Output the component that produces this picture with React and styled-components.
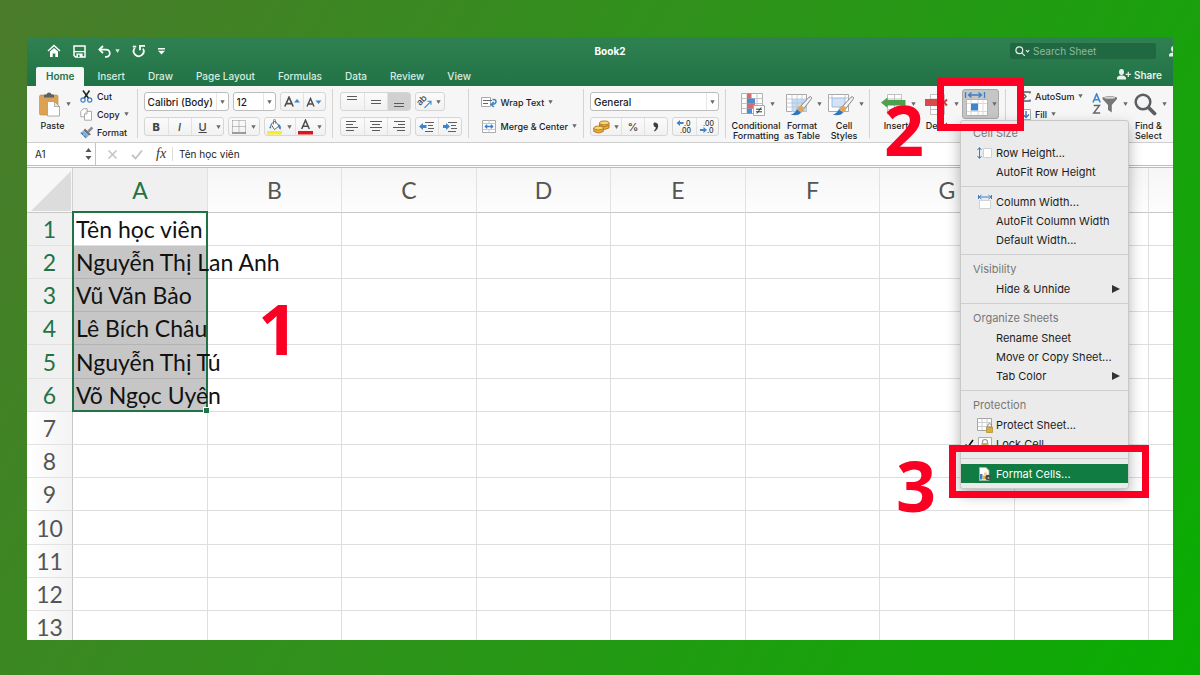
import React from 'react';
import styled, { createGlobalStyle, css } from 'styled-components';

const GlobalStyle = createGlobalStyle`
    *, *::before, *::after {
        box-sizing: border-box;
    }
    body {
        margin: 0;
        font-family: Inter, "Liberation Sans", sans-serif;
        font-size: 9px;
        color: #1c1c1c;
    }
    button, input, select {
        font: inherit;
        color: inherit;
        margin: 0;
        padding: 0;
        border: 0;
        background: none;
        outline: none;
    }
    svg {
        display: block;
        flex: none;
    }
`;

const columns = ['A', 'B', 'C', 'D', 'E', 'F', 'G', 'H', 'I'];
const names = ['Tên học viên', 'Nguyễn Thị Lan Anh', 'Vũ Văn Bảo', 'Lê Bích Châu', 'Nguyễn Thị Tú', 'Võ Ngọc Uyên'];
const rows = Array.from({ length: 13 }, (_, i) => i + 1);
const tabs = ['Home', 'Insert', 'Draw', 'Page Layout', 'Formulas', 'Data', 'Review', 'View'];

/* icons */

const Caret = ({ color = '#6a6a6a' }) => (
    <svg width="5" height="4" viewBox="0 0 5 4"><path d="M.3.300h4.400L2.500 4z" fill={color} /></svg>
);

const HomeIcon = () => (
    <svg width="14" height="14" viewBox="0 0 14 14" fill="none" stroke="#fff">
        <path d="M1 7 7 1.500 13 7" strokeWidth="1.500" />
        <path d="M3 7.600 7 4l4 3.600V13H8.300V9.600H5.700V13H3z" fill="#fff" stroke="none" />
    </svg>
);

const SaveIcon = () => (
    <svg width="13" height="13" viewBox="0 0 13 13">
        <path d="M1 1h11v11H2.500L1 10.500z" fill="none" stroke="#fff" strokeWidth="1.500" />
        <path d="M1 6h11v1.200H1zM3.400 8.500h6.200V12H3.400z" fill="#fff" />
        <path d="M5 9.800h1.500V12H5z" fill="#2a7a4b" />
    </svg>
);

const UndoIcon = () => (
    <svg width="13" height="13" viewBox="0 0 13 13" fill="none" stroke="#fff" strokeWidth="1.800">
        <path d="M5 1 1.400 4.600 5 8.200" />
        <path d="M1.800 4.600h6.400a3.400 3.400 0 0 1 0 7.200H7" />
    </svg>
);

const RedoIcon = () => (
    <svg width="14" height="14" viewBox="0 0 14 14" fill="none" stroke="#fff" strokeWidth="1.800">
        <path d="M2.800 4A5 5 0 1 0 11 4.600" />
        <path d="M8 6.200V1.800H13" />
        <path d="M.8 2.600h3.400" />
    </svg>
);

const MoreIcon = () => (
    <svg width="7" height="7" viewBox="0 0 7 7" fill="#fff"><path d="M0 0h7v1.400H0zM0 2.800h7L3.500 6.600z" /></svg>
);

const LoupeIcon = () => (
    <svg width="15" height="11" viewBox="0 0 15 11" fill="none" stroke="#e3efe8" strokeWidth="1.200">
        <circle cx="4.300" cy="4.300" r="3.400" />
        <path d="m6.800 6.800 3 3M11 4.200l1.600 1.600 1.600-1.600" />
    </svg>
);

const PersonIcon = () => (
    <svg width="14" height="11" viewBox="0 0 14 11" fill="#e6f2ea">
        <ellipse cx="4.500" cy="3" rx="2.500" ry="3" />
        <path d="M0 10.400V8.600C.6 7 2.600 6.400 4.500 6.400S8.400 7 9 8.600v1.800zM10.700 2.700h1.200v2h2v1.200h-2v2h-1.200v-2h-2V4.700h2z" />
    </svg>
);

const PasteIcon = () => (
    <svg width="22" height="25" viewBox="0 0 22 25">
        <rect x=".5" y="3" width="18.500" height="20" rx="1.500" fill="#dca253" stroke="#c18a3e" strokeWidth=".6" />
        <path d="M5 5.500V3.500q0-1 1-1h1.500Q8 .5 10 .5t2.500 2H14q1 0 1 1v2z" fill="#5d6064" />
        <path d="M8.500 9.500h7l5 5v9.500h-12z" fill="#fff" stroke="#9b9b9b" strokeWidth=".8" />
        <path d="M15.500 9.500v5h5z" fill="#e8e8e8" stroke="#9b9b9b" strokeWidth=".8" />
    </svg>
);

const CutIcon = () => (
    <svg width="13" height="13" viewBox="0 0 13 13" fill="none">
        <path d="M3 .5 8.700 8.500M9.500.5 4 8.500" stroke="#222" strokeWidth="1.500" />
        <circle cx="3" cy="10" r="2.100" stroke="#3c7fc4" strokeWidth="1.200" />
        <circle cx="9.700" cy="10" r="2.100" stroke="#3c7fc4" strokeWidth="1.200" />
    </svg>
);

const CopyIcon = () => (
    <svg width="13" height="13" viewBox="0 0 13 13" fill="#fff" stroke="#a2a2a2" strokeWidth=".9">
        <path d="M.8 3.500 3.200.8h4v8H.8z" />
        <path d="M4.500 6 7 3.400h4.500v8.800h-7z" />
        <path d="M4.500 6H7V3.400" />
    </svg>
);

const FormatIcon = () => (
    <svg width="13" height="13" viewBox="0 0 13 13">
        <path d="m12.400 1.400-4.200 4.200" stroke="#8b8f94" strokeWidth="2.600" />
        <path d="m5 2.600 6 5.800-2.200 1.200L3.500 4.400z" fill="#6c7176" />
        <path d="M3.500 4.400 8.800 9.600 6 12.400.3 6.800z" fill="#7fb0df" />
        <path d="m.3 6.800 2.900.4-.4 2 2.600.8.6 2.400z" fill="#46729c" />
    </svg>
);

const BordersIcon = () => (
    <svg width="14" height="14" viewBox="0 0 14 14" stroke="#8f8f8f" strokeDasharray="1 1" fill="none">
        <path d="M.5.500h13v12M.5.500v12M7 .5v12M.5 6.500h13" />
        <path d="M0 13h14" stroke="#444" strokeDasharray="none" />
    </svg>
);

const BucketIcon = () => (
    <svg width="15" height="16" viewBox="0 0 15 16">
        <path d="M4 5.200 8 2l4 5-4.500 3.600z" fill="#fff" stroke="#666" />
        <path d="M6.500 5.500V1.500q0-1 1-1t1 1v3" fill="none" stroke="#666" strokeWidth=".8" />
        <path d="M4 5.200 2.200 9l2 .4zM11.500 5q3.500 2 2 5.800Q10.500 9 11.500 5z" fill="#3c7fc4" />
        <path d="M0 12h15v3.500H0z" fill="#f5ee2c" />
    </svg>
);

const FontColorIcon = () => (
    <svg width="15" height="16" viewBox="0 0 15 16">
        <path d="M3.700 10 7.500 1.200 11.300 10M5 7.200h5" fill="none" stroke="#4b4b4b" strokeWidth="1.500" />
        <path d="M0 12h15v3.500H0z" fill="#d9161c" />
    </svg>
);

const SizeIcon = ({ down }) => (
    <svg width="16" height="12" viewBox="0 0 16 12">
        {down
            ? <path d="M1 10.500 4.500 2.500 8 10.500M2.300 8h4.400" fill="none" stroke="#4b4b4b" strokeWidth="1.400" />
            : <path d="M.8 10.500 5 1.200l4.200 9.300M2.300 7.600h5.400" fill="none" stroke="#4b4b4b" strokeWidth="1.600" />}
        <path d={down ? 'M9.500 4.500h6L12.500 8z' : 'M10 6.500h6L13 3z'} fill="#3c86cf" />
    </svg>
);

const LINES = {
    top: [[2, 1, 10], [2, 4, 10]],
    middle: [[2, 5, 10], [2, 8, 10]],
    bottom: [[2, 8, 10], [2, 11, 10]],
    left: [[1, 1, 10], [1, 4, 7], [1, 7, 12], [1, 10, 8]],
    center: [[1, 1, 12], [3, 4, 8], [1, 7, 12], [3, 10, 8]],
    right: [[2, 1, 11], [6, 4, 7], [1, 7, 12], [5, 10, 8]],
};

const LinesIcon = ({ kind }) => (
    <svg width="14" height="13" viewBox="0 0 14 13" fill="#5a5a5a">
        {LINES[kind].map(([x, y, w]) => <rect key={y} x={x} y={y} width={w} height="1" />)}
    </svg>
);

const IndentIcon = ({ right }) => (
    <svg width="15" height="11" viewBox="0 0 15 11">
        <path d="M6 1h9v1H6zM9 4h5v1H9zM9 7h6v1H9zM6 10h8v1H6z" fill="#616161" />
        <path d={right ? 'M8 5.500 4 2v2H1v3h3v2z' : 'M0 5.500 4 2v2h3.500v3H4v2z'} fill="#3c86cf" />
    </svg>
);

const OrientationIcon = () => (
    <svg width="15" height="15" viewBox="0 0 15 15">
        <text x="3" y="12" fontSize="9" fill="#444" transform="rotate(-45 3 12)">ab</text>
        <path d="m7.500 13.800 6-6M10.500 7.300H14V10.800" fill="none" stroke="#3c86cf" strokeWidth="1.100" />
    </svg>
);

const WrapIcon = () => (
    <svg width="16" height="12" viewBox="0 0 16 12" fill="none">
        <path d="M.5 1.500h9v9h-9z" fill="#fff" stroke="#aaa" />
        <path d="M2 4.500h9M2 7.500h5" stroke="#666" />
        <path d="M11.500 3.500q3.500-.5 3.500 2T11 8.500M12.800 6 10 8.500l2.800 2.500" stroke="#3c86cf" strokeWidth="1.500" />
    </svg>
);

const MergeIcon = () => (
    <svg width="16" height="13" viewBox="0 0 16 13" fill="none">
        <path d="M1.500.500h13v12h-13z" fill="#fff" stroke="#aaa" />
        <path d="M1.500 3.500h13M1.500 9.500h13M8 .5v3M8 9.500v3" stroke="#c9c9c9" />
        <path d="M4.500 6.500h7M6.200 4.600 4.200 6.500l2 1.900M9.800 4.600l2 1.900-2 1.900" stroke="#3c7fc4" strokeWidth="1.300" />
    </svg>
);

const CoinsIcon = () => (
    <svg width="17" height="14" viewBox="0 0 17 14" fill="#eeb13c" stroke="#a16b14" strokeWidth=".8">
        <path d="M6.500 3v5q4.500 3 9.500 0V3z" />
        <path d="M6.500 5.500q4.500 2.500 9.500 0" />
        <ellipse cx="11.300" cy="2.900" rx="4.800" ry="2" fill="#fbd370" />
        <path d="M.8 8v3.500q4.500 3 9.500 0V8z" />
        <ellipse cx="5.600" cy="8" rx="4.800" ry="2" fill="#fbd370" />
    </svg>
);

const CommaIcon = () => (
    <svg width="6" height="10" viewBox="0 0 6 10">
        <path d="M1 .6Q5.400.4 5.200 4.400 5 7.600 1.800 9.600L1 8.800Q3 7 2.800 5.200.6 4.800.5 3 .4 1 1 .6z" fill="#3c3c3c" />
    </svg>
);

const DecimalIcon = ({ less }) => (
    <svg width="17" height="15" viewBox="0 0 17 15" fontSize="7" fill="#333">
        {less ? <text x="4" y="7">.00</text> : <text x="8" y="7">.0</text>}
        {less ? <text x="8" y="14">.0</text> : <text x="4" y="14">.00</text>}
        {less
            ? <path d="M8 11 4.500 8v2H1v2h3.500v2z" fill="#3c86cf" />
            : <path d="M.5 4 4 1v2h3.500v2H4v2z" fill="#3c86cf" />}
    </svg>
);

const ConditionalIcon = () => (
    <svg width="24" height="24" viewBox="0 0 24 24">
        <path d="M.5 1.500h21v20H.5z" fill="#fff" stroke="#b0b0b0" />
        <path d="M.5 6.500h21M.5 11.500h21M.5 16.500h21M6 1.500v20M16 1.500v20" stroke="#c4c4c4" fill="none" />
        <path d="M6 1.500h4.500v5H6zM6 11.500h8v5H6z" fill="#d9696c" />
        <path d="M6 6.500h8v5H6zM6 16.500h5v5H6z" fill="#4e8ccb" />
        <path d="M12.500 13.500h11v10h-11z" fill="#fff" stroke="#aaa" />
        <path d="M15 17.200h6M15 19.800h6M20 15.500l-4 6" stroke="#333" />
    </svg>
);

const BrushIcon = ({ single }) => (
    <svg width="26" height="24" viewBox="0 0 26 24">
        <path d="M.5 2.500h20v17H.5z" fill="#fff" stroke="#a9a9a9" />
        {single
            ? <path d="M4 6h13v9H4z" fill="#d3e2f5" stroke="#9bbce4" />
            : <path d="M6 7h14.500v12.500H6z" fill="#c5dcf3" />}
        {single
            ? <path d="M.5 6H4M17 6h3.500M4 2.500V6M17 2.500V6" stroke="#c4c4c4" />
            : <path d="M.5 7h20M.5 11h20M.5 15h20M6 2.500v17M11 2.500v17M16 2.500v17" stroke="#b3c4d4" strokeWidth=".8" />}
        <path d="M23 5.200q2-1.200 2.500.4.200.8-.7 2L17.500 17l-3-2.600z" fill="#f3f3f3" stroke="#777" strokeWidth=".9" />
        <path d="M14 14q4-.5 4.200 3 0 2.500-3 3.700L10.800 17.200q.8-2.700 3.200-3.200z" fill="#e0a45a" />
        <path d="M10.800 17.200 15.200 20.700Q11.500 24.600 4.500 22.600 9 21.500 10.800 17.200z" fill="#2e76bf" />
    </svg>
);

const RowsIcon = ({ remove }) => (
    <svg width="25" height="23" viewBox="0 0 25 23">
        <path d="M6.500 1.500h14v20h-14zM6.500 6h14M6.500 16.500h14M13.500 1.500v20" fill="#fff" stroke="#c0c0c0" />
        {remove
            ? <path d="M1 6h15v7H1z" fill="#d94a4c" />
            : <path d="M0 9.500 6.500 4.500V7H24.500v5.500H6.500V15z" fill="#4ea04e" />}
        {remove && <path d="m17 6.500 6 6M23 6.500l-6 6" stroke="#db3b3c" strokeWidth="2" />}
    </svg>
);

const CellFormatIcon = () => (
    <svg width="25" height="26" viewBox="0 0 25 26">
        <path d="M1.500 1v6M20.500 1v6M4.500 4h13M7.500 1.500 4.500 4l3 2.500M14.500 1.500l3 2.500-3 2.500" fill="none" stroke="#3c7fc4" strokeWidth="1.300" />
        <path d="M2.500 8.500h21v16H2.500z" fill="#fff" stroke="#b3b3b3" />
        <path d="M3 12.500h20M3 20.500h20M7 9v15M14 9v15M19 9v15" stroke="#dadada" />
        <path d="M7 12.500h7v7H7z" fill="#3c86cf" />
    </svg>
);

const SumIcon = () => (
    <svg width="10" height="11" viewBox="0 0 10 11" fill="none" stroke="#5c5c5c" strokeWidth="1.400">
        <path d="M9 2.500V1H1l4 4.500L1 10h8V8.500" />
    </svg>
);

const FillIcon = () => (
    <svg width="10" height="11" viewBox="0 0 10 11" fill="none">
        <path d="M.5.500h9v10h-9z" fill="#fff" stroke="#aaa" />
        <path d="M5 2v6.500M2 5.500l3 3 3-3" stroke="#3c7fc4" strokeWidth="1.500" />
    </svg>
);

const SortIcon = () => (
    <svg width="26" height="22" viewBox="0 0 26 22">
        <path d="M1 9.500 4.600 1l3.600 8.500M2.300 6.800h4.600" fill="none" stroke="#3c86cf" strokeWidth="1.600" />
        <path d="M1.700 12.500h5.800L1.700 20h6.500" fill="none" stroke="#666" strokeWidth="1.400" />
        <path d="M10.500 4.500q7.500-2.500 14.500 0v1.600L19.800 12v7.500L16 17v-5l-5.500-5.900z" fill="#777" />
        <ellipse cx="17.700" cy="4.800" rx="5.500" ry="1" fill="#d4d4d4" />
    </svg>
);

const FindIcon = () => (
    <svg width="23" height="23" viewBox="0 0 23 23" fill="none" stroke="#5e5e5e">
        <circle cx="9" cy="9" r="7.300" strokeWidth="2.500" fill="#f1f5f8" />
        <path d="m15 15 5.500 5.500" strokeWidth="3.800" strokeLinecap="round" />
    </svg>
);

const RowHeightIcon = () => (
    <svg width="16" height="14" viewBox="0 0 16 14" fill="none">
        <path d="M2.500 2v10M.5 4l2-2.500 2 2.500M.5 10l2 2.500 2-2.500" stroke="#3c7fc4" />
        <path d="M6.500 2.500h8v9h-8z" fill="#fff" stroke="#cfcfcf" />
    </svg>
);

const ColumnWidthIcon = () => (
    <svg width="16" height="16" viewBox="0 0 16 16" fill="none">
        <path d="M2.500 3h10M4.500 1 2 3l2.500 2M11.500 1 14 3l-2.500 2M1.500 1v4M14.500 1v4" stroke="#3c7fc4" />
        <path d="M2.500 6.500h11v8h-11z" fill="#fff" stroke="#d2d2d2" />
    </svg>
);

const ProtectIcon = () => (
    <svg width="16" height="16" viewBox="0 0 16 16" fill="none">
        <path d="M.5 1.500h14v12H.5z" fill="#fff" stroke="#a5a5a5" />
        <path d="M1 5.500h13M1 9.500h13M5 2v11M10 2v11" stroke="#cfcfcf" />
        <path d="M10.800 10V8.500a1.800 1.800 0 0 1 3.600 0V10" stroke="#8c8c8c" />
        <path d="M9.500 10h6v5.500h-6z" fill="#dcae3a" stroke="#a57f20" strokeWidth=".6" />
    </svg>
);

const LockIcon = () => (
    <svg width="16" height="16" viewBox="0 0 16 16" fill="none">
        <path d="M1.500 1.500h13v13h-13z" fill="#fff" stroke="#adadad" />
        <path d="M5.500 8V6a2.500 2.500 0 0 1 5 0V8" stroke="#999" strokeWidth="1.200" />
        <path d="M4.500 7h7v6h-7z" fill="#e2a25a" />
    </svg>
);

const FormatCellsIcon = () => (
    <svg width="16" height="16" viewBox="0 0 16 16" fill="none">
        <path d="M2.500 1.500h6.500l3 3v10h-9.500z" fill="#fff" stroke="#9fb7a7" strokeWidth=".8" />
        <path d="M3 8h2.500v5.500H3z" fill="#3c7fc4" />
        <path d="M5.800 9.500H8v4H5.800z" fill="#e9b440" />
        <path d="M7 6.500h3v3H7z" fill="#f0d38a" />
        <circle cx="11" cy="11.500" r="2.800" fill="#4a4a4a" />
        <circle cx="11.500" cy="12" r="1.100" fill="#aaa" />
    </svg>
);

/* layout */

const Page = styled.main`
    display: flex;
    height: 100vh;
    padding: 37px 27px 35px;
    background: linear-gradient(120deg, #4a7b2b 0%, #2c9419 50%, #09ad02 100%);
`;

const Window = styled.div`
    flex: 1;
    min-width: 0;
    display: flex;
    flex-direction: column;
    overflow: hidden;
    background: #fff;
`;

const Header = styled.header`
    background: linear-gradient(#2f8152, #217346);
    color: #fff;
`;

const TitleBar = styled.div`
    display: grid;
    grid-template-columns: 1fr auto 1fr;
    align-items: center;
    height: 30px;
    padding: 0 0 2px 20px;
`;

const QuickTools = styled.div`
    display: flex;
    align-items: center;
    gap: 12px;
`;

const ToolButton = styled.button`
    display: flex;
    align-items: center;
    gap: 4px;
`;

const BookTitle = styled.h1`
    margin: 0;
    font-size: 10px;
    font-weight: 700;
`;

const TitleEnd = styled.div`
    display: flex;
    justify-content: flex-end;
    align-items: center;
    gap: 13px;
`;

const SearchBox = styled.label`
    display: flex;
    align-items: center;
    gap: 3px;
    width: 146px;
    height: 16px;
    padding: 0 5px;
    border-radius: 2px;
    background: #1f6841;

    input {
        flex: 1;
        min-width: 0;
        font-size: 10px;
    }
    input::placeholder {
        color: #8fb9a1;
        opacity: 1;
    }
`;

const CroppedIcon = styled.span`
    width: 4px;
    overflow: hidden;
`;

const TabBar = styled.nav`
    display: flex;
    align-items: stretch;
    height: 19px;
    padding: 0 11px 0 9px;
`;

const Tab = styled.a`
    display: flex;
    align-items: center;
    padding: 0 10px 2px;
    margin-right: 3px;
    border-radius: 2px 2px 0 0;
    font-size: 10px;
    font-weight: 500;
    text-decoration: none;
    color: #d9ebe0;

    ${({ $active }) => $active && css`
        background: #f6f6f6;
        color: #217346;
        font-weight: 600;
    `}
`;

const ShareButton = styled.button`
    display: flex;
    align-items: center;
    gap: 3px;
    margin-left: auto;
    padding-bottom: 4px;
    font-size: 10px;
    font-weight: 600;
    color: #e6f2ea;
`;

const Ribbon = styled.section`
    position: relative;
    z-index: 2;
    display: flex;
    height: 57px;
    padding: 1px 0 1px 4px;
    background: #f6f6f6;
    border-bottom: 1px solid #cfcfcf;
    font-weight: 500;
`;

const Group = styled.div`
    flex: none;
    display: flex;
    gap: ${({ $gap }) => $gap || 0}px;
    padding: ${({ $pad }) => $pad || '0 7px 0 6px'};
    background: ${({ $last }) => ($last ? 'none' : 'linear-gradient(#d4d4d4, #d4d4d4) right 2px / 1px 49px no-repeat')};
`;

const Stack = styled.div`
    display: flex;
    flex-direction: column;
    gap: ${({ $gap }) => $gap || 0}px;
    padding-top: ${({ $top }) => $top || 0}px;
`;

const Line = styled.div`
    display: flex;
    gap: 4px;
`;

const SmallButton = styled.button`
    flex: none;
    display: flex;
    align-items: center;
    gap: 4px;
    height: 18px;
    white-space: nowrap;
`;

const BigButton = styled.button`
    display: flex;
    flex-direction: column;
    align-items: center;
    width: ${({ $width }) => $width}px;
    line-height: 10px;
    white-space: nowrap;
`;

const BigIcon = styled.span`
    display: flex;
    align-items: center;
    gap: 5px;
    height: 34px;
    padding-left: 4px;
`;

const Field = styled.label`
    display: flex;
    align-items: center;
    width: ${({ $width }) => $width}px;
    height: 19px;
    border: 1px solid #bdbdbd;
    border-radius: 3px;
    background: #fff;

    select {
        flex: 1;
        min-width: 0;
        height: 17px;
        padding-left: 3px;
        border-right: 1px solid #e6e6e6;
        appearance: none;
        font-size: 10px;
    }
    svg {
        margin: 0 3px;
    }
`;

const Segments = styled.div`
    display: flex;
    height: 19px;
    border: 1px solid #d6d6d6;
    border-radius: 3px;
    background: linear-gradient(#fbfbfb, #f1f1f1);
    overflow: hidden;
`;

const Segment = styled.button`
    flex: none;
    display: flex;
    align-items: center;
    justify-content: center;
    width: ${({ $width }) => $width || 23}px;
    border-left: ${({ $plain }) => ($plain ? '0' : '1px solid #e2e2e2')};
    background: ${({ $on }) => ($on ? '#d0d0d0' : 'none')};
    font-size: 11px;
    font-weight: ${({ $bold }) => ($bold ? 800 : 500)};
    font-style: ${({ $italic }) => ($italic ? 'italic' : 'normal')};
    text-decoration: ${({ $underline }) => ($underline ? 'underline' : 'none')};
    color: #444;

    &:first-child {
        border-left: 0;
    }
`;

const FormatAnchor = styled.div`
    position: relative;
    width: 37px;
    height: 30px;
    margin-top: 2px;
`;

const FormatButton = styled.button`
    display: flex;
    align-items: center;
    justify-content: center;
    gap: 3px;
    width: 100%;
    height: 100%;
    border: 1px solid #a8a8a8;
    border-radius: 3px;
    background: #c6c6c6;
`;

/* menu */

const Menu = styled.div`
    position: absolute;
    z-index: 1;
    top: 31px;
    left: -2px;
    width: 169px;
    padding: 3px 0 5px;
    border: 1px solid #c8c8c8;
    border-radius: 3px;
    background: #ebebeb;
    box-shadow: 0 6px 14px rgba(0, 0, 0, 0.3);
    font-size: 11px;
    font-weight: 400;
`;

const MenuSection = styled.div`
    & + & {
        margin-top: 5px;
        padding-top: 5px;
        border-top: 1px solid #cfcfcf;
    }
`;

const MenuHeading = styled.div`
    height: 19px;
    padding-left: 12px;
    line-height: 19px;
    color: #777;
`;

const MenuItem = styled.button`
    position: relative;
    display: grid;
    grid-template-columns: 9px 16px 1fr auto;
    align-items: center;
    gap: 3px;
    width: 100%;
    height: 19px;
    padding: 0 8px 0 4px;
    text-align: left;
    white-space: nowrap;
    background: ${({ $active }) => ($active ? '#107c41' : 'none')};
    color: ${({ $active }) => ($active ? '#fff' : '#1c1c1c')};
`;

const Ring = styled.span`
    position: absolute;
    z-index: 3;
    inset: ${({ $inset }) => $inset};
    border: 7px solid #fb0023;
    pointer-events: none;
`;

const StepNumber = styled.span`
    position: absolute;
    z-index: 3;
    top: ${({ $top }) => $top}px;
    left: ${({ $left }) => $left}px;
    font-family: "Open Sans", "Noto Sans", sans-serif;
    font-size: 70px;
    font-weight: 700;
    line-height: 70px;
    color: #fb0023;
    pointer-events: none;
`;

/* formula bar */

const FormulaBar = styled.div`
    display: flex;
    align-items: center;
    height: 25px;
    border-bottom: 3px double #bcbcbc;
    background: #fff;
`;

const NameBox = styled.div`
    display: flex;
    align-items: center;
    align-self: stretch;
    width: 69px;
    padding: 0 3px 0 8px;
    border-right: 1px solid #c4c4c4;

    input {
        flex: 1;
        min-width: 0;
        font-size: 10px;
    }
`;

const FormulaTools = styled.div`
    display: flex;
    align-items: center;
    gap: 13px;
    height: 14px;
    padding: 0 6px 0 11px;
    border-right: 1px solid #dcdcdc;
`;

const FxButton = styled.button`
    font-family: "Liberation Serif", serif;
    font-size: 14px;
    font-style: italic;
    line-height: 14px;
    color: #333;
`;

const FormulaInput = styled.input`
    flex: 1;
    min-width: 0;
    padding-left: 6px;
    font-size: 10px;
`;

/* sheet */

const Sheet = styled.div`
    flex: 1;
    min-height: 0;
    overflow: hidden;
`;

const Grid = styled.table`
    table-layout: fixed;
    width: 1256px;
    border-collapse: separate;
    border-spacing: 0;
    font-family: Lato, "Noto Sans", sans-serif;
    font-size: 23px;
    line-height: 28px;
    color: #111;
`;

const Col = styled.col`
    width: ${({ $head }) => ($head ? 46 : 134)}px;

    &:nth-child(even) {
        width: 135px;
    }
`;

const Corner = styled.td`
    height: 45px;
    padding: 3px 1px 1px 4px;
    border-right: 1px solid #d0d0d0;
    border-bottom: 1px solid #c8c8c8;
    background: #f7f7f7;
`;

const ColumnHead = styled.th`
    padding: 0;
    height: 45px;
    border-right: 1px solid #e2e2e2;
    border-bottom: 1px solid #c8c8c8;
    background: ${({ $active }) => ($active ? '#f0f0f0' : 'linear-gradient(#f6f6f6, #fdfdfd)')};
    color: ${({ $active }) => ($active ? '#217346' : '#555')};
    font-weight: 400;
`;

const Row = styled.tr`
    height: 33px;

    &:nth-child(5n) {
        height: 34px;
    }
`;

const RowHead = styled.th`
    padding: 0;
    border-right: 1px solid #c8c8c8;
    border-bottom: 1px solid #e2e2e2;
    background: ${({ $active }) => ($active ? '#f0f0f0' : 'linear-gradient(90deg, #fff, #f3f3f3)')};
    color: ${({ $active }) => ($active ? '#217346' : '#555')};
    font-weight: 400;
`;

const Cell = styled.td`
    position: relative;
    padding: 0 0 0 3px;
    border-right: 1px solid #dedede;
    border-bottom: 1px solid ${({ $selected }) => ($selected ? '#b4b4b4' : '#dedede')};
    background: ${({ $selected }) => ($selected ? '#c6c6c6' : 'none')};
    white-space: nowrap;
`;

const CellText = styled.span`
    position: relative;
    z-index: 2;
`;

const Selection = styled.span`
    position: absolute;
    z-index: 1;
    top: -2px;
    left: -1px;
    width: calc(100% + 2px);
    height: 201px;
    border: 2px solid #217346;
    pointer-events: none;

    &::after {
        content: '';
        position: absolute;
        right: -3px;
        bottom: -3px;
        width: 6px;
        height: 6px;
        border: solid #fff;
        border-width: 1px 0 0 1px;
        background: #217346;
    }
`;

const Item = ({ icon, label, checked, submenu, active, children }) => (
    <MenuItem role="menuitem" $active={active}>
        <span>
            {checked && (
                <svg width="9" height="9" viewBox="0 0 9 9"><path d="M.5 5.500 3 8 8 1" fill="none" stroke="#111" strokeWidth="1.600" /></svg>
            )}
        </span>
        <span>{icon}</span>
        <span>{label}</span>
        {submenu && <svg width="8" height="8" viewBox="0 0 8 8"><path d="M0 0v8l8-4z" fill="#333" /></svg>}
        {children}
    </MenuItem>
);

function FormatMenu() {
    return (
        <Menu role="menu" aria-label="Format">
            <MenuSection>
                <MenuHeading>Cell Size</MenuHeading>
                <Item icon={<RowHeightIcon />} label="Row Height..." />
                <Item label="AutoFit Row Height" />
            </MenuSection>
            <MenuSection>
                <Item icon={<ColumnWidthIcon />} label="Column Width..." />
                <Item label="AutoFit Column Width" />
                <Item label="Default Width..." />
            </MenuSection>
            <MenuSection>
                <MenuHeading>Visibility</MenuHeading>
                <Item label="Hide & Unhide" submenu />
            </MenuSection>
            <MenuSection>
                <MenuHeading>Organize Sheets</MenuHeading>
                <Item label="Rename Sheet" />
                <Item label="Move or Copy Sheet..." />
                <Item label="Tab Color" submenu />
            </MenuSection>
            <MenuSection>
                <MenuHeading>Protection</MenuHeading>
                <Item icon={<ProtectIcon />} label="Protect Sheet..." />
                <Item icon={<LockIcon />} label="Lock Cell" checked />
            </MenuSection>
            <MenuSection>
                <Item icon={<FormatCellsIcon />} label="Format Cells..." active>
                    <Ring $inset="-19px -21px -15px -12px" />
                    <StepNumber $top={-14} $left={-65}>3</StepNumber>
                </Item>
            </MenuSection>
        </Menu>
    );
}

function AppHeader() {
    return (
        <Header>
            <TitleBar>
                <QuickTools>
                    <ToolButton aria-label="Home"><HomeIcon /></ToolButton>
                    <ToolButton aria-label="Save"><SaveIcon /></ToolButton>
                    <ToolButton aria-label="Undo"><UndoIcon /><Caret color="#d5e8dc" /></ToolButton>
                    <ToolButton aria-label="Repeat"><RedoIcon /></ToolButton>
                    <ToolButton aria-label="Customize toolbar"><MoreIcon /></ToolButton>
                </QuickTools>
                <BookTitle>Book2</BookTitle>
                <TitleEnd>
                    <SearchBox>
                        <LoupeIcon />
                        <input type="search" aria-label="Search Sheet" placeholder="Search Sheet" />
                    </SearchBox>
                    <CroppedIcon><PersonIcon /></CroppedIcon>
                </TitleEnd>
            </TitleBar>
            <TabBar>
                {tabs.map((tab) => (
                    <Tab key={tab} href={`#${tab}`} $active={tab === 'Home'}>{tab}</Tab>
                ))}
                <ShareButton><PersonIcon />Share</ShareButton>
            </TabBar>
        </Header>
    );
}

function AppRibbon() {
    return (
        <Ribbon>
            <Group $gap={6} $pad="0 9px 0 0">
                <BigButton $width={43}>
                    <BigIcon><PasteIcon /><Caret /></BigIcon>
                    Paste
                </BigButton>
                <Stack>
                    <SmallButton><CutIcon />Cut</SmallButton>
                    <SmallButton><CopyIcon />Copy <Caret /></SmallButton>
                    <SmallButton><FormatIcon />Format</SmallButton>
                </Stack>
            </Group>
            <Group>
                <Stack $gap={6} $top={5}>
                    <Line>
                        <Field $width={85}>
                            <select aria-label="Font"><option>Calibri (Body)</option></select>
                            <Caret />
                        </Field>
                        <Field $width={43}>
                            <select aria-label="Font size"><option>12</option></select>
                            <Caret />
                        </Field>
                        <Segments>
                            <Segment $width={22} aria-label="Increase font size"><SizeIcon /></Segment>
                            <Segment $width={22} aria-label="Decrease font size"><SizeIcon down /></Segment>
                        </Segments>
                    </Line>
                    <Line>
                        <Segments>
                            <Segment $bold>B</Segment>
                            <Segment $italic>I</Segment>
                            <Segment $underline>U</Segment>
                            <Segment $width={9} $plain aria-label="Underline styles"><Caret /></Segment>
                        </Segments>
                        <Segments>
                            <Segment $width={20} aria-label="Borders"><BordersIcon /></Segment>
                            <Segment $width={10} $plain aria-label="Border styles"><Caret /></Segment>
                        </Segments>
                        <Segments>
                            <Segment $width={19} aria-label="Fill color"><BucketIcon /></Segment>
                            <Segment $width={11} $plain aria-label="Fill colors"><Caret /></Segment>
                            <Segment $width={20} aria-label="Font color"><FontColorIcon /></Segment>
                            <Segment $width={10} $plain aria-label="Font colors"><Caret /></Segment>
                        </Segments>
                    </Line>
                </Stack>
            </Group>
            <Group $pad="0 7px">
                <Stack $gap={6} $top={5}>
                    <Line>
                        <Segments>
                            <Segment aria-label="Top align"><LinesIcon kind="top" /></Segment>
                            <Segment aria-label="Middle align"><LinesIcon kind="middle" /></Segment>
                            <Segment aria-label="Bottom align" $on><LinesIcon kind="bottom" /></Segment>
                        </Segments>
                        <Segments>
                            <Segment $width={18} aria-label="Orientation"><OrientationIcon /></Segment>
                            <Segment $width={10} $plain aria-label="Orientations"><Caret /></Segment>
                        </Segments>
                    </Line>
                    <Line>
                        <Segments>
                            <Segment aria-label="Align left"><LinesIcon kind="left" /></Segment>
                            <Segment aria-label="Center"><LinesIcon kind="center" /></Segment>
                            <Segment aria-label="Align right"><LinesIcon kind="right" /></Segment>
                        </Segments>
                        <Segments>
                            <Segment $width={22} aria-label="Decrease indent"><IndentIcon /></Segment>
                            <Segment $width={23} aria-label="Increase indent"><IndentIcon right /></Segment>
                        </Segments>
                    </Line>
                </Stack>
            </Group>
            <Group $pad="0 7px 0 12px">
                <Stack $gap={6} $top={6}>
                    <SmallButton><WrapIcon />Wrap Text <Caret /></SmallButton>
                    <SmallButton><MergeIcon />Merge &amp; Center <Caret /></SmallButton>
                </Stack>
            </Group>
            <Group>
                <Stack $gap={6} $top={5}>
                    <Field $width={129}>
                        <select aria-label="Number format"><option>General</option></select>
                        <Caret />
                    </Field>
                    <Line>
                        <Segments>
                            <Segment $width={20} aria-label="Currency"><CoinsIcon /></Segment>
                            <Segment $width={10} $plain aria-label="Currencies"><Caret /></Segment>
                            <Segment>%</Segment>
                            <Segment aria-label="Comma style"><CommaIcon /></Segment>
                        </Segments>
                        <Segments>
                            <Segment aria-label="Increase decimal"><DecimalIcon /></Segment>
                            <Segment $width={22} aria-label="Decrease decimal"><DecimalIcon less /></Segment>
                        </Segments>
                    </Line>
                </Stack>
            </Group>
            <Group $pad="0 6px">
                <BigButton $width={48}>
                    <BigIcon><ConditionalIcon /><Caret /></BigIcon>
                    <span>Conditional<br />Formatting</span>
                </BigButton>
                <BigButton $width={44}>
                    <BigIcon><BrushIcon /><Caret /></BigIcon>
                    <span>Format<br />as Table</span>
                </BigButton>
                <BigButton $width={40}>
                    <BigIcon><BrushIcon single /><Caret /></BigIcon>
                    <span>Cell<br />Styles</span>
                </BigButton>
            </Group>
            <Group $pad="0 7px 0 5px">
                <BigButton $width={42}>
                    <BigIcon><RowsIcon /><Caret /></BigIcon>
                    Insert
                </BigButton>
                <BigButton $width={45}>
                    <BigIcon><RowsIcon remove /><Caret /></BigIcon>
                    Delete
                </BigButton>
                <FormatAnchor>
                    <FormatButton aria-label="Format" aria-haspopup="menu"><CellFormatIcon /><Caret /></FormatButton>
                    <FormatMenu />
                    <Ring $inset="-11px -25px -12px -25px" />
                    <StepNumber $top={5} $left={-78}>2</StepNumber>
                </FormatAnchor>
            </Group>
            <Group $gap={7} $pad="0 0 0 15px" $last>
                <Stack>
                    <SmallButton><SumIcon />AutoSum <Caret /></SmallButton>
                    <SmallButton><FillIcon />Fill <Caret /></SmallButton>
                </Stack>
                <BigButton $width={36} aria-label="Sort and filter">
                    <BigIcon><SortIcon /><Caret /></BigIcon>
                </BigButton>
                <BigButton $width={30}>
                    <BigIcon><FindIcon /><Caret /></BigIcon>
                    <span>Find &amp;<br />Select</span>
                </BigButton>
            </Group>
        </Ribbon>
    );
}

function CellBar() {
    return (
        <FormulaBar>
            <NameBox>
                <input aria-label="Name box" defaultValue="A1" />
                <svg width="7" height="14" viewBox="0 0 7 14" fill="#555"><path d="M.5 5h6L3.500 1zM.5 9h6l-3 4z" /></svg>
            </NameBox>
            <FormulaTools>
                <ToolButton aria-label="Cancel">
                    <svg width="11" height="11" viewBox="0 0 11 11"><path d="m1.500 1.500 8 8M9.500 1.500l-8 8" stroke="#c2c2c2" strokeWidth="1.500" /></svg>
                </ToolButton>
                <ToolButton aria-label="Enter">
                    <svg width="12" height="11" viewBox="0 0 12 11"><path d="m1 6 3.500 3.500L11 1.500" fill="none" stroke="#c2c2c2" strokeWidth="1.800" /></svg>
                </ToolButton>
                <FxButton>fx</FxButton>
            </FormulaTools>
            <FormulaInput aria-label="Formula" defaultValue="Tên học viên" />
        </FormulaBar>
    );
}

function Spreadsheet() {
    return (
        <Sheet>
            <Grid>
                <colgroup>
                    <Col $head />
                    {columns.map((c) => <Col key={c} />)}
                </colgroup>
                <thead>
                    <tr>
                        <Corner>
                            <svg width="40" height="40" viewBox="0 0 40 40"><path d="M0 40 40 0v40z" fill="#dcdcdc" /></svg>
                        </Corner>
                        {columns.map((c) => <ColumnHead key={c} scope="col" $active={c === 'A'}>{c}</ColumnHead>)}
                    </tr>
                </thead>
                <tbody>
                    {rows.map((row) => (
                        <Row key={row}>
                            <RowHead scope="row" $active={row <= names.length}>{row}</RowHead>
                            {columns.map((c) => (
                                <Cell key={c} $selected={c === 'A' && row > 1 && row <= names.length}>
                                    {c === 'A' && <CellText>{names[row - 1]}</CellText>}
                                    {c === 'A' && row === 1 && <Selection />}
                                    {c === 'B' && row === 4 && <StepNumber $top={-19} $left={50}>1</StepNumber>}
                                </Cell>
                            ))}
                        </Row>
                    ))}
                </tbody>
            </Grid>
        </Sheet>
    );
}

function App() {
    return (
        <Page>
            <GlobalStyle />
            <Window>
                <AppHeader />
                <AppRibbon />
                <CellBar />
                <Spreadsheet />
            </Window>
        </Page>
    );
}

export default App;
